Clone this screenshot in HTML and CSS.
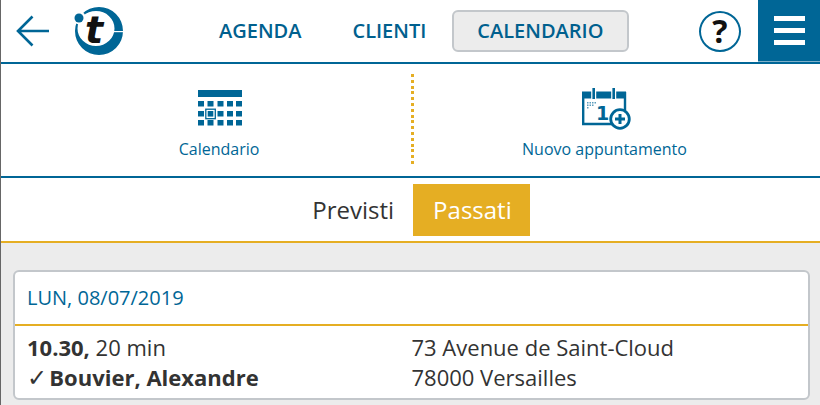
FILE: index.html
```html
<!DOCTYPE html>
<html lang="it">
<head>
<meta charset="utf-8">
<title>Calendario</title>
<link rel="stylesheet" href="styles.css">
</head>
<body>
<div class="page">
  <header class="topbar">
    <a class="back" aria-label="Indietro">
      <svg width="34" height="34" viewBox="0 0 34 34"><path d="M34 17H3M17.500 2.500 3 17l14.500 14.500" fill="none" stroke="#006696" stroke-width="2.600"/></svg>
    </a>
    <div class="logo">
      <svg width="50" height="50" viewBox="0 0 50 50">
        <path fill-rule="evenodd" d="M1 25a24 24 0 1 0 48 0a24 24 0 1 0-48 0ZM3.500 22.500a18.500 17.500 0 1 1 37 0a18.500 17.500 0 1 1-37 0Z" fill="#006696"/>
        <rect x="40" y="25" width="10" height="1.200" fill="#fff"/>
        <circle cx="5.500" cy="12" r="6.500" fill="#fff"/>
        <circle cx="5" cy="12" r="4.500" fill="#006696"/>
        <text class="logo-t" x="11" y="37">t</text>
      </svg>
    </div>
    <nav class="nav">
      <a class="nav-item">AGENDA</a>
      <a class="nav-item">CLIENTI</a>
      <a class="nav-item nav-active">CALENDARIO</a>
    </nav>
    <div class="help">?</div>
    <div class="menu" aria-label="Menu"><span></span><span></span><span></span></div>
  </header>
  <section class="actions">
    <a class="action action-left">
      <svg class="cal-grid" width="44" height="38" viewBox="0 0 44 38">
        <g fill="#006696">
          <rect x="0" y="0" width="44" height="7"/>
          <rect x="0" y="11" width="6" height="5.500"/><rect x="9.500" y="11" width="6" height="5.500"/><rect x="19.500" y="11" width="6" height="5.500"/><rect x="29" y="11" width="6" height="5.500"/><rect x="38" y="11" width="6" height="5.500"/>
          <rect x="0" y="21" width="6" height="5.500"/><rect x="19.500" y="21" width="6" height="5.500"/><rect x="29" y="21" width="6" height="5.500"/><rect x="38" y="21" width="6" height="5.500"/>
          <rect x="0" y="30" width="6" height="5.500"/><rect x="9.500" y="30" width="6" height="5.500"/><rect x="19.500" y="30" width="6" height="5.500"/><rect x="29" y="30" width="6" height="5.500"/><rect x="38" y="30" width="6" height="5.500"/>
          <rect x="9.700" y="21" width="5.600" height="5.600"/>
        </g>
        <rect x="7.800" y="19.200" width="9.500" height="9.500" fill="none" stroke="#006696" stroke-width="1.300"/>
      </svg>
      <span class="action-label">Calendario</span>
    </a>
    <div class="divider"></div>
    <a class="action action-right">
      <svg class="cal-plus" width="50" height="42" viewBox="0 0 50 42">
        <path d="M1.200 4V36H30M43 4V22" fill="none" stroke="#006696" stroke-width="2.400"/>
        <rect x="0" y="3.500" width="44" height="7" fill="#006696"/>
        <path d="M11.700 0V11M31.700 0V11" stroke="#fff" stroke-width="5"/>
        <path d="M11.700 0V11M31.700 0V11" stroke="#006696" stroke-width="2.600"/>
        <path d="M5 14h1.500v1.500H5zM7.500 14H9v1.500H7.500zM10 14h1.500v1.500H10zM12.500 14H14v1.500h-1.500zM5 16.500h1.500V18H5zM7.500 16.500H9V18H7.500zM10 16.500h1.500V18H10zM5 19h1.500v1.500H5z" fill="#5b9cbc"/>
        <text class="cal-one" x="14" y="32">1</text>
        <circle cx="38" cy="31" r="9.300" fill="#fff" stroke="#006696" stroke-width="2.800"/>
        <path d="M38 26V36M33 31H43" stroke="#006696" stroke-width="3"/>
      </svg>
      <span class="action-label">Nuovo appuntamento</span>
    </a>
  </section>
  <div class="tabs">
    <a class="tab">Previsti</a>
    <a class="tab tab-active">Passati</a>
  </div>
  <main class="content">
    <article class="card">
      <h2 class="card-date">LUN, 08/07/2019</h2>
      <div class="card-body">
        <div class="card-col">
          <div><b>10.30,</b> 20 min</div>
          <div><span class="check">✓</span> <b>Bouvier, Alexandre</b></div>
        </div>
        <div class="card-col">
          <div>73 Avenue de Saint-Cloud</div>
          <div>78000 Versailles</div>
        </div>
      </div>
    </article>
  </main>
</div>
</body>
</html>
```

FILE: styles.css
```css
* { box-sizing: border-box; }
html, body { margin: 0; padding: 0; height: 100%; overflow: hidden; }
body { font-family: "Open Sans", sans-serif; color: #333; background: #ececec; }
.page { height: 405px; border-left: 1px solid #666; display: flex; flex-direction: column; }

.topbar { height: 64px; flex: none; display: flex; background: #fff; border-bottom: 2px solid #006696; }
.back { width: 73px; padding: 14px 0 0 14px; flex: none; }
.logo { width: 50px; padding-top: 6px; flex: none; }
.logo-t { font-family: "DejaVu Sans", sans-serif; font-weight: 700; font-style: italic; font-size: 38px; fill: #111; }
.nav { display: flex; align-items: flex-start; padding: 10px 0 0 95px; width: 575px; flex: none; }
.nav-item { font-size: 20px; font-weight: 600; line-height: 42px; color: #00608e; margin-right: 51px; }
.nav-item:nth-child(2) { margin-right: 26px; }
.nav-active { margin-right: 0; height: 42px; background: #ececec; border: 2px solid #c3c7cb; border-radius: 6px; line-height: 38px; padding: 0 24px 0 23px; }
.help { width: 42px; height: 41px; margin: 11px 0 0 0; border: 2.500px solid #006696; border-radius: 50%; font-size: 32px; font-weight: 700; line-height: 36px; text-align: center; color: #111; flex: none; }
.menu { width: 62px; height: 62px; margin-left: 17px; background: #006696; border-bottom: 1px solid #7fb0c9; padding: 16px 15px 0 16px; display: flex; flex-direction: column; gap: 7px; flex: none; }
.menu span { height: 5px; background: #fff; display: block; }

.actions { height: 114px; flex: none; display: flex; align-items: stretch; background: #fff; border-bottom: 2px solid #006696; padding: 10px 0 12px; }
.action { display: flex; flex-direction: column; align-items: center; }
.action-left { width: 410px; padding: 16px 0 0 26px; }
.divider { width: 3px; flex: none; background: repeating-linear-gradient(to bottom, #e5ae23 0 3px, transparent 3px 5.8px); }
.action-right { flex: 1; padding: 14px 25px 0 0; }
.action svg { flex: none; }
.cal-grid { margin-left: 2px; }
.cal-plus { margin-left: 5px; }
.action-label { font-size: 16px; color: #006696; line-height: 20px; }
.action-left .action-label { margin-top: 11px; }
.action-right .action-label { margin-top: 9px; }
.cal-one { font-family: "DejaVu Sans", sans-serif; font-size: 19px; font-weight: 700; fill: #006696; }

.tabs { height: 65px; flex: none; background: #fff; border-bottom: 2px solid #e5ae23; display: flex; justify-content: center; align-items: flex-start; padding: 6px 0 0 1px; }
.tab { font-size: 24px; line-height: 52px; height: 52px; padding: 0 19px 0 20px; color: #333; }
.tab-active { background: #e5ae23; color: #fff; padding: 0 18px 0 20px; }

.content { flex: 1; padding: 27px 10px 0 12px; }
.card { height: 130px; background: #fff; border: 2px solid #c3c7cb; border-radius: 6px; }
.card-date { margin: 0; height: 54px; border-bottom: 2px solid #e5ae23; padding: 0 0 0 12px; font-size: 20px; font-weight: 400; line-height: 52px; color: #006696; }
.card-body { display: flex; padding: 6px 12px 0; font-size: 22px; line-height: 30px; color: #333; }
.card-col { width: 386px; white-space: nowrap; }
.card-col b { font-weight: 700; }
.check { font-family: "DejaVu Sans", sans-serif; font-size: 24px; line-height: 0; margin-right: -3.500px; }
```
